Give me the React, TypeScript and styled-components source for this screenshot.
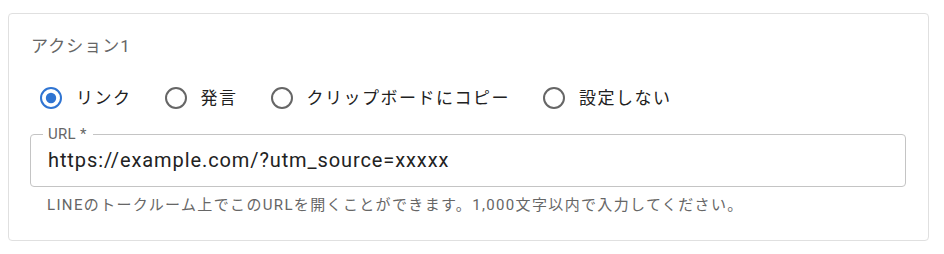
import React, { useState } from "react";
import styled, { createGlobalStyle } from "styled-components";

const Global = createGlobalStyle`
  html, body { margin: 0; padding: 0; background: #ffffff; }
  body {
    font-family: "Roboto", "Noto Sans CJK JP", sans-serif;
    -webkit-font-smoothing: antialiased;
  }
  * { box-sizing: border-box; }
`;

const Page = styled.div`
  padding: 13px 15px 13px 8px;
`;

const Card = styled.section`
  border: 1px solid #e0e0e0;
  border-radius: 4px;
  padding: 20px 22px 25px 21px;
  display: flex;
  flex-direction: column;
`;

const Title = styled.h2`
  margin: 0 0 0 1px;
  font-size: 17px;
  line-height: 25px;
  font-weight: 400;
  letter-spacing: 1px;
  color: #666666;
`;

const RadioGroup = styled.div`
  display: flex;
  align-items: center;
  gap: 32px;
  height: 42px;
  margin-top: 18px;
  padding-left: 9px;
`;

const Option = styled.label`
  display: flex;
  align-items: center;
  gap: 13px;
  cursor: pointer;
  font-size: 17px;
  line-height: 24px;
  letter-spacing: 1.5px;
  color: #212121;
`;

const HiddenInput = styled.input`
  position: absolute;
  opacity: 0;
  width: 0;
  height: 0;
  margin: 0;
`;

const RadioIcon = styled.svg<{ $checked: boolean }>`
  width: 24px;
  height: 24px;
  flex: none;
  color: ${(p) => (p.$checked ? "#2f74d2" : "#666666")};
`;

const Field = styled.fieldset`
  margin: 7px 0 0 0;
  padding: 0 17px;
  border: 1px solid #c4c4c4;
  border-radius: 4px;
  min-width: 0;
`;

const Legend = styled.legend`
  margin-left: -5px;
  padding: 0 6px 0 5px;
  font-size: 15px;
  line-height: 16px;
  letter-spacing: 0.3px;
  color: #666666;
`;

const TextInput = styled.input`
  display: block;
  width: 100%;
  height: 44px;
  padding: 3px 0 11px;
  border: 0;
  outline: none;
  background: transparent;
  font-family: "Roboto", "Noto Sans CJK JP", sans-serif;
  font-size: 20px;
  line-height: 30px;
  letter-spacing: 0.9px;
  color: #222222;
`;

const Helper = styled.p`
  margin: 8px 0 0 17px;
  font-size: 15px;
  line-height: 20px;
  letter-spacing: 1.35px;
  color: #666666;
`;

const options = ["リンク", "発言", "クリップボードにコピー", "設定しない"];

function Radio({ checked }: { checked: boolean }) {
  return (
    <RadioIcon $checked={checked} viewBox="0 0 24 24" aria-hidden="true">
      <circle cx="12" cy="12" r="10" fill="none" stroke="currentColor" strokeWidth="2" />
      {checked && <circle cx="12" cy="12" r="5.2" fill="currentColor" />}
    </RadioIcon>
  );
}

export default function App() {
  const [selected, setSelected] = useState(0);
  const [url, setUrl] = useState("https://example.com/?utm_source=xxxxx");
  return (
    <>
      <Global />
      <Page>
        <Card>
          <Title>アクション1</Title>
          <RadioGroup role="radiogroup">
            {options.map((o, i) => (
              <Option key={o}>
                <HiddenInput
                  type="radio"
                  name="action1"
                  checked={selected === i}
                  onChange={() => setSelected(i)}
                />
                <Radio checked={selected === i} />
                {o}
              </Option>
            ))}
          </RadioGroup>
          <Field>
            <Legend>URL *</Legend>
            <TextInput value={url} onChange={(e) => setUrl(e.target.value)} />
          </Field>
          <Helper>
            LINEのトークルーム上でこのURLを開くことができます。1,000文字以内で入力してください。
          </Helper>
        </Card>
      </Page>
    </>
  );
}
